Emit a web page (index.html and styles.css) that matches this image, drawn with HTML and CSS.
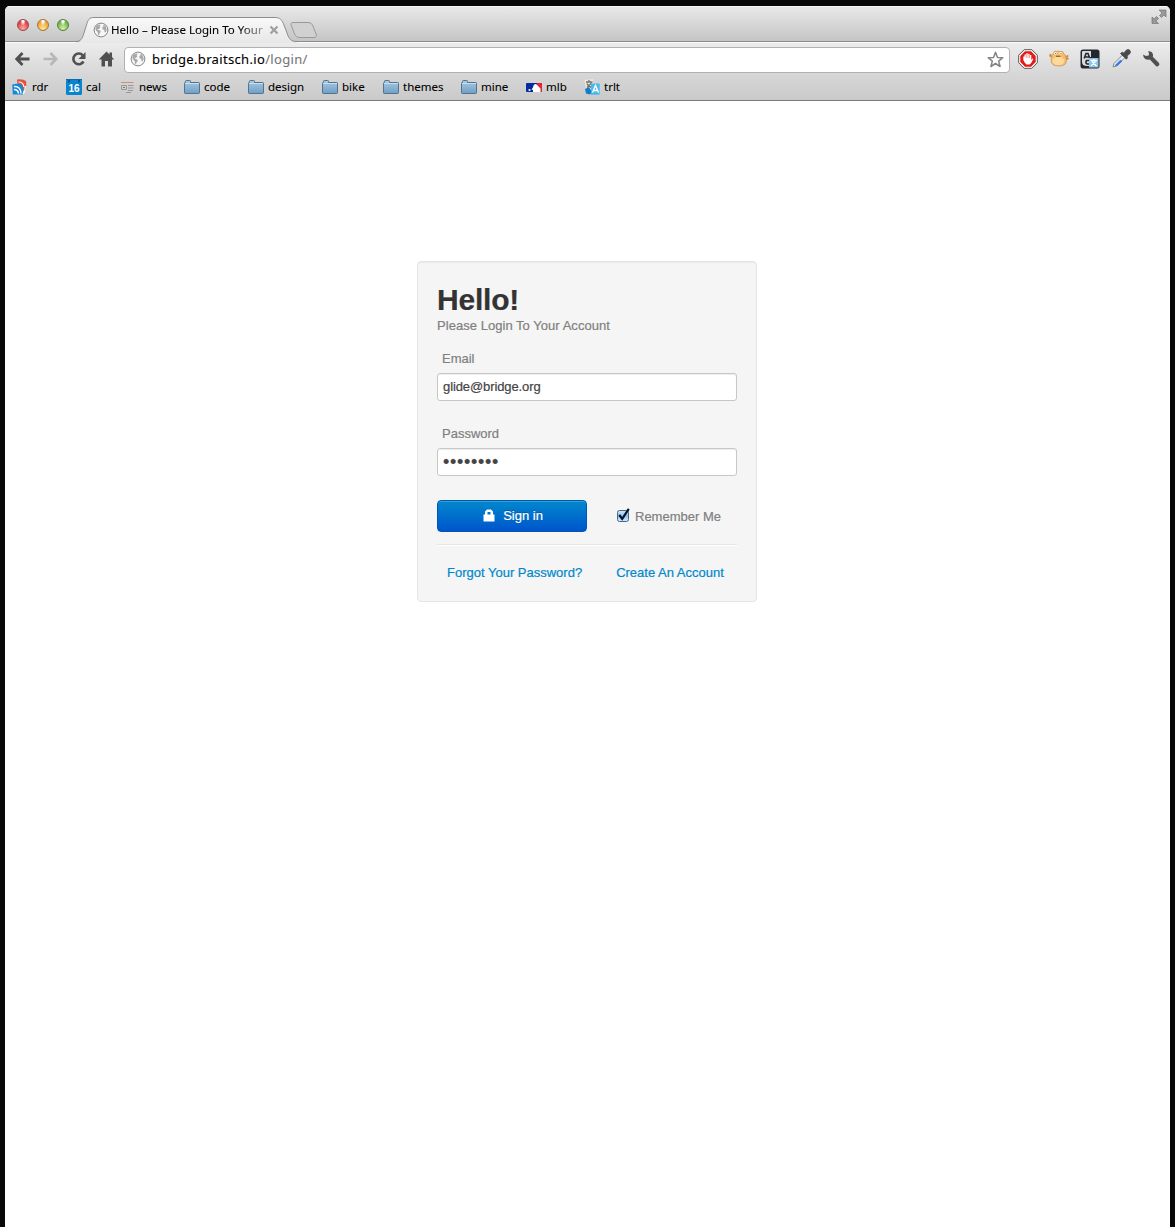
FILE: index.html
```html
<!DOCTYPE html>
<html lang="en">
<head>
<meta charset="utf-8">
<title>Hello – Please Login To Your Account</title>
<link rel="stylesheet" href="styles.css">
</head>
<body>
<svg width="0" height="0" class="defs" aria-hidden="true">
  <defs>
    <linearGradient id="folder" x2="0" y2="1"><stop offset="0" stop-color="#a9cae3"/><stop offset="1" stop-color="#6f9fc6"/></linearGradient>
    <linearGradient id="tabfill" x2="0" y2="1"><stop offset="0" stop-color="#f9f9f9"/><stop offset="1" stop-color="#e7e7e7"/></linearGradient>
    <linearGradient id="check" x2="0" y2="1"><stop offset="0" stop-color="#d5e7fa"/><stop offset=".5" stop-color="#8fc0f0"/><stop offset="1" stop-color="#d4f0ff"/></linearGradient>
    <symbol id="globe" viewBox="0 0 16 16">
      <circle cx="8" cy="8" r="6.900" fill="#f7f7f7" stroke="#858585" stroke-width="1"/>
      <path d="M3 4 6.300 2.300l1.300 1.200-1 1 .8.900-1.600 1.500-1.300.2 1 1 1.700.5.600 1.400-1.400 1.400-.3 2-1-.5-.4-2.600L3 8.500 2.300 6zM10.200 2.500l2 1.300 1.300 2.500v2.500l-1 1.700-1-.6-.2-1.900-1.500-.6-.6-1.900 1.300-1.300z" fill="#aaa"/>
    </symbol>
    <symbol id="folder-icon" viewBox="0 0 16 15">
      <path d="M1.500 2.500V1.300q0-.8.800-.8h3.400q.8 0 .8.800v1.200h8.200q.8 0 .8.800v9.400q0 .8-.8.800H1.300q-.8 0-.8-.8V3.300q0-.8.800-.8z" fill="url(#folder)" stroke="#54728b"/>
      <path d="M1 3.500h14" stroke="#c5dff0"/>
    </symbol>
  </defs>
</svg>
<div class="window">
  <header class="titlebar">
    <div class="lights"><i class="light red"></i><i class="light amber"></i><i class="light green"></i></div>
    <div class="tab">
      <svg class="tab-shape" width="246" height="26" viewBox="0 0 246 26">
        <path d="M0 25.500C6 25 7 22 9 16L11.500 8C13 3 14 .5 19 .5H200C205 .5 207 3 209 8L212 16C214 22 216 24.500 222 24.500V26H0z" fill="url(#tabfill)"/>
        <path d="M0 24.500C6 24.500 7 22 9 16L11.500 8C13 3 14 .5 19 .5H200C205 .5 207 3 209 8L212 16C214 22 216 24.500 222 24.500H246" fill="none" stroke="#8d8d8d"/>
        <path d="M218 5.500H233C236 5.500 237 7 238 9L241 17C242 19 241 20.500 239 20.500H225C222 20.500 220.500 19 219.500 17L216.500 9C215.500 7 216 5.500 218 5.500z" fill="#d1d1d1" stroke="#999"/>
      </svg>
      <svg class="tab-globe" width="16" height="16"><use href="#globe"/></svg>
      <span class="tab-title">Hello – Please Login To Your</span>
      <svg class="tab-close" width="10" height="10"><path d="M1.500 1.500l7 7m0-7l-7 7" stroke="#a0a0a0" stroke-width="2.300"/></svg>
    </div>
    <svg class="fullscreen" width="16" height="16" viewBox="0 0 16 16"><path d="M8 1h7v7l-2-2-2.500 2.500-2-2L11 4zM1 8l2 2 2.500-2.500 2 2L5 12l2.500 2.500H1z" fill="#999" stroke="#777" stroke-width=".7"/></svg>
  </header>
  <div class="toolbar">
    <svg width="16" height="16" viewBox="0 0 16 16"><path d="M7.500 2 1.800 8l5.700 6M2 8H14.500" fill="none" stroke="#505050" stroke-width="2.800"/></svg>
    <svg width="16" height="16" viewBox="0 0 16 16"><path d="M7.500 2l5.700 6-5.700 6M13 8H.5" fill="none" stroke="#b7b7b7" stroke-width="2.600"/></svg>
    <svg width="16" height="16" viewBox="0 0 16 16"><path d="M11.800 4.300A5.400 5.400 0 1 0 12.500 10.500" fill="none" stroke="#505050" stroke-width="2.600"/><path d="M14.500 1v7h-7z" fill="#505050"/></svg>
    <svg width="16" height="16" viewBox="0 0 16 16"><path d="M7.500.5L10.500 3.500V1.500H13v4.500l2.200 2.400H13V15.500H9V10H6v5.500H2.500V8.400H-.2z" fill="#505050"/></svg>
    <div class="omnibox">
      <svg width="16" height="16"><use href="#globe"/></svg>
      <span class="url">bridge.braitsch.io<span class="path">/login/</span></span>
      <svg class="star" width="17" height="17" viewBox="0 0 17 17"><path d="M8.500 1.300l2 5.100 5.300.3-4.100 3.400 1.400 5.400-4.600-3-4.600 3 1.400-5.400L1.200 6.700l5.300-.3z" fill="#fff" stroke="#858585" stroke-width="1.500" stroke-linejoin="round"/></svg>
    </div>
    <div class="extensions">
      <svg width="20" height="20" viewBox="0 0 20 20"><path d="M6.200.7h7.600l5.500 5.500v7.600l-5.500 5.500H6.200L.7 13.800V6.200z" fill="#fff" stroke="#555"/><path d="M6.900 2.300h6.200l4.600 4.600v6.200l-4.600 4.600H6.900l-4.600-4.600V6.900z" fill="#e31c16"/><path d="M6.500 9V5.500h1.400V9h.4V4.300h1.500V9h.4V4.800h1.400V9h.4V6h1.300v5l1-1.500 1 .6-2.100 4-1.600 1.500H8.500L6.800 13.800 5.300 11V7.500h1.200z" fill="#fff"/></svg>
      <svg width="20" height="20" viewBox="0 0 20 20">
        <path d="M4.500 4.500Q4.500 2 7 2.200q1 .3 2 .2h2q3.500-.9 3.500 2.200 2 1 2.500 3l2-1.500-.3 2.500.8 1.500-2 .4q.5 6.500-7.500 6.500T2.200 11.500Q2 10.300 2.500 9L.5 7l.8-2 1.900 1.500z" fill="#f4bd6a" stroke="#c18f4e" stroke-width=".7"/>
        <ellipse cx="9.300" cy="12" rx="6" ry="4.200" fill="#ffd99a"/>
        <circle cx="6.500" cy="4.300" r="1.300" fill="#fff"/><circle cx="11.800" cy="4.300" r="1.300" fill="#fff"/>
        <path d="M6.200 4.500h1m4.300 0h1M7 7.300h4.500" stroke="#79502f" stroke-width="1.100"/>
        <path d="M1 5.500l1.500 2.500M16.500 8.500l2-1.500M17 9.500l2 .2" stroke="#d2812f" stroke-width="1.200"/>
      </svg>
      <svg width="20" height="20" viewBox="0 0 20 20"><rect x=".5" y=".5" width="19" height="19" rx="2.500" fill="#24282c"/><path d="M2 3q0-1 1-1h8v6h-1v9H7q-5 0-5-4z" fill="#d7dce0"/><path d="M4.200 9.500L6 4.500h2l1.800 5M5.500 8h3M10 11.500H6.500q-1.500 2.500.7 3.500h2.300" fill="none" stroke="#25292d" stroke-width="1.600"/><rect x="9" y="9" width="9.500" height="9.500" fill="#8bc5ec"/><path d="M10.500 11.500h6.500M13.700 10v2M11 17l4.500-4.500M12 12.500l4.500 4.500" stroke="#fff" stroke-width="1.300"/></svg>
      <svg width="20" height="20" viewBox="0 0 20 20"><path d="M2 18l1-3.500L11.500 6l2.500 2.500L5.500 17z" fill="#e5edf4" stroke="#888"/><path d="M4 16.500l5.500-5.500 1.500 1.200-5 4.800z" fill="#2d79dd" stroke="#2d79dd" stroke-width=".5"/><path d="M9.500 4.500l1.700-1.300 1.600.8L15.500 1q2-1 3.300.3 1.200 1.400.2 3.200L16 7l.6 1.700-1.300 1.500z" fill="#4a4a4a" stroke="#4a4a4a" stroke-width=".8"/></svg>
      <svg width="18" height="18" viewBox="0 0 18 18"><path d="M6 1.400Q10 1 11 4.500q.1 1.500-.2 2.200L17 13q1 1.500-.3 2.800-1.500 1.200-2.800.1L7.800 9.500q-4 1-6-2L1 4.500l3 1.600 2.700-.5.300-2.300z" fill="#505050"/></svg>
    </div>
  </div>
  <nav class="bookmarks">
    <a class="bookmark"><svg width="16" height="16" viewBox="0 0 16 16"><path d="M5 .5q6-.8 9 1.500.7 5-.5 10L6 11z" fill="#e05343"/><path d="M6.500 3q5 0 5.500 5" stroke="#fff" stroke-width="1.200" fill="none"/><path d="M.3 5.500Q6 4 10 6q2 4 1 9.500H.8z" fill="#1389d7"/><path d="M2 7.500q6.500-.5 7 7M2 10.500q4 0 4.500 4" fill="none" stroke="#fff" stroke-width="1.500"/><path d="M11 15q2.500-3 2.500-8" stroke="#eef7fc" stroke-width="1.500" fill="none"/></svg>rdr</a>
    <a class="bookmark"><svg width="16" height="16" viewBox="0 0 16 16"><rect width="16" height="16" rx="1.500" fill="#0a84cf"/><path d="M0 .5h16" stroke="#086cad"/><path d="M3 1v2.500m10-2.500v2.500" stroke="#045990" stroke-width="2"/><text x="8" y="12.800" class="cal-day">16</text></svg>cal</a>
    <a class="bookmark news"><svg width="16" height="16" viewBox="0 0 16 16"><path d="M1 3.500h12.500" stroke="#d88983"/><path d="M1.500 6.500h5v4h-5zM8 6.500h5.500M8 9h5.500M8 11.500h5M6 13.500h5" fill="none" stroke="#999"/><path d="M3 8.500h2" stroke="#777"/></svg>news</a>
    <a class="bookmark"><svg width="16" height="15"><use href="#folder-icon"/></svg>code</a>
    <a class="bookmark"><svg width="16" height="15"><use href="#folder-icon"/></svg>design</a>
    <a class="bookmark"><svg width="16" height="15"><use href="#folder-icon"/></svg>bike</a>
    <a class="bookmark"><svg width="16" height="15"><use href="#folder-icon"/></svg>themes</a>
    <a class="bookmark"><svg width="16" height="15"><use href="#folder-icon"/></svg>mine</a>
    <a class="bookmark"><svg width="16" height="16" viewBox="0 0 16 16"><rect y="4" width="16" height="9" rx="1" fill="#062b9d"/><path d="M11 4h4q1 0 1 1v7q0 1-1 1h-4z" fill="#e3252d"/><path d="M7.500 6.500Q8 5 9.500 5t2 1.500L12.500 7.500l2 2V13H7v-2L5.500 10.500 7 8.500z" fill="#fff"/><circle cx="3.500" cy="11" r="1.100" fill="#fff"/></svg>mlb</a>
    <a class="bookmark"><svg width="16" height="16" viewBox="0 0 16 16"><path d="M.5 1l8.500-1 1 10-8 1z" fill="#e9e9e0"/><path d="M2 3h6.500M5 1v2M3 4.500q1 3 5 4M7.500 4L3 8.500" stroke="#77736d" stroke-width="1.300" fill="none"/><path d="M1 10l4-2 3 5-2 2.500-4-1z" fill="#147bc7"/><path d="M7 4.500h8q.7 0 .7.700V15q0 .7-.7.700H7z" fill="#4bb9ed"/><path d="M8.500 13.500l3-7 3 7M9.500 11.500h4" fill="none" stroke="#fff" stroke-width="1.400"/></svg>trlt</a>
  </nav>
  <main class="page">
    <form class="login">
      <h1>Hello!</h1>
      <p class="lead">Please Login To Your Account</p>
      <label class="label" for="email">Email</label>
      <input class="field" id="email" type="text" value="glide@bridge.org">
      <label class="label">Password</label>
      <div class="field password">••••••••</div>
      <div class="actions">
        <button class="signin" type="button"><svg width="12" height="13" viewBox="0 0 12 13"><path d="M.5 5.500h1.500V2.500L4 .5h4l2 2v3h1.500V12.500H.5zM4.500 5.500h3V3h-3z" fill="#fff"/></svg><span>Sign in</span></button>
        <label class="remember"><svg width="15" height="17" viewBox="0 0 15 17"><rect x="1.500" y="3.500" width="11" height="11" rx="2" fill="url(#check)" stroke="#506487"/><path d="M3.200 8l3 3.800L12.800 1.800" fill="none" stroke="#07152b" stroke-width="2.200"/></svg><span>Remember Me</span></label>
      </div>
      <hr>
      <div class="links"><a>Forgot Your Password?</a><a>Create An Account</a></div>
    </form>
  </main>
</div>
</body>
</html>
```

FILE: styles.css
```css
* { box-sizing: border-box; }
body {
  margin: 0;
  padding: 6px 5px 0;
  height: 1227px;
  overflow: hidden;
  background: #080808;
  font: 13px/18px "Liberation Sans", Arial, sans-serif;
}
.defs { position: absolute; }
svg { display: block; flex: none; }
.window {
  height: 1221px;
  background: #fff;
  border-radius: 5px 5px 0 0;
  overflow: hidden;
}
.titlebar {
  display: flex;
  height: 36px;
  padding-left: 12px;
  background: linear-gradient(#e9e9e9, #c5c5c5);
  border-bottom: 1px solid #8d8d8d;
  box-shadow: inset 0 1px #f7f7f7;
}
.lights { display: flex; gap: 8px; padding-top: 13px; width: 58px; }
.light {
  width: 12px;
  height: 12px;
  border-radius: 50%;
  border: 1px solid;
  flex: none;
}
.red { background: radial-gradient(ellipse at 50% 10%, #fff 0 10%, transparent 38%), radial-gradient(circle at 50% 85%, #ffaaa3, #df444b 65%); border-color: #9c4444; }
.amber { background: radial-gradient(ellipse at 50% 10%, #fff 0 10%, transparent 38%), radial-gradient(circle at 50% 85%, #ffe995, #eea33a 65%); border-color: #a17438; }
.green { background: radial-gradient(ellipse at 50% 10%, #fff 0 10%, transparent 38%), radial-gradient(circle at 50% 85%, #d4f5a3, #75b44c 65%); border-color: #4f8040; }
.tab {
  position: relative;
  display: flex;
  align-items: center;
  width: 246px;
  height: 26px;
  margin-top: 11px;
  padding-left: 18px;
}
.tab-shape { position: absolute; left: 0; top: 0; }
.tab-globe, .tab-title, .tab-close { position: relative; }
.tab-title {
  width: 156px;
  margin-left: 2px;
  font: 11.500px/16px "Noto Sans", sans-serif;
  letter-spacing: .03px;
  white-space: nowrap;
  color: #000;
  -webkit-text-stroke: .1px;
  -webkit-mask-image: linear-gradient(90deg, #000 126px, rgba(0,0,0,.3) 154px);
  mask-image: linear-gradient(90deg, #000 126px, rgba(0,0,0,.3) 154px);
}
.tab-close { margin-left: 2px; }
.fullscreen { margin: 3px 3px 0 auto; }
.toolbar {
  display: flex;
  align-items: center;
  gap: 12px;
  height: 35px;
  padding: 0 7px 2px 10px;
  background: linear-gradient(#ececec, #d5d5d5);
  border-top: 1px solid #fafafa;
}
.omnibox {
  display: flex;
  align-items: center;
  width: 886px;
  height: 26px;
  margin: 1px 0 0 -3px;
  padding: 0 5px 1px;
  background: #fff;
  border: 1px solid #b1b1b1;
  border-radius: 4px;
}
.url {
  margin-left: 6px;
  font: 13px/18px "Noto Sans", sans-serif;
  letter-spacing: .33px;
  color: #000;
  -webkit-text-stroke: .1px;
}
.path { color: #777; }
.star { margin-left: auto; }
.extensions { display: flex; align-items: center; gap: 11px; margin-left: -4px; }
.bookmarks {
  display: grid;
  grid-template-columns: 54px 54px 64px 64px 74px 61px 78px 65px 58px 50px;
  height: 24px;
  padding: 0 0 3px 7px;
  align-items: center;
  background: linear-gradient(#d5d5d5, #cacaca);
  border-bottom: 1px solid #797979;
}
.bookmark {
  display: flex;
  align-items: center;
  gap: 4px;
  font: 11.500px/16px "Noto Sans", sans-serif;
  color: #000;
  -webkit-text-stroke: .1px;
}
.bookmark.news { gap: 3px; }
.cal-day { font: bold 10px "Liberation Sans", sans-serif; fill: #fff; text-anchor: middle; -webkit-text-stroke: 0; }
.page { display: flex; justify-content: center; padding-top: 160px; }
.login {
  width: 340px;
  height: 341px;
  margin-right: 1px;
  padding: 19px;
  background: #f5f5f5;
  border: 1px solid #e5e5e5;
  border-radius: 4px;
  box-shadow: inset 0 1px 1px rgba(0,0,0,.05);
  color: #808080;
  -webkit-text-stroke: .2px;
}
h1 {
  margin: 0;
  padding-top: 1px;
  font-size: 30px;
  line-height: 35px;
  letter-spacing: -.2px;
  color: #333;
}
.lead { margin: 0 0 15px; letter-spacing: .04px; }
.label { display: block; padding-left: 5px; margin-bottom: 5px; }
.field {
  display: block;
  width: 300px;
  height: 28px;
  margin-bottom: 24px;
  padding: 3px 5px 5px;
  font: 13px/18px "Liberation Sans", Arial, sans-serif;
  letter-spacing: -.1px;
  color: #444;
  background: #fff;
  border: 1px solid #c7c7c7;
  border-radius: 3px;
  box-shadow: inset 0 1px 1px rgba(0,0,0,.075);
}
.password { padding-top: 4px; font-size: 18px; letter-spacing: .7px; }
.actions { display: flex; align-items: center; height: 32px; }
.signin {
  display: flex;
  justify-content: center;
  align-items: center;
  gap: 8px;
  width: 150px;
  height: 32px;
  padding: 0 0 1px 2px;
  font: 13px/18px "Liberation Sans", Arial, sans-serif;
  color: #fff;
  -webkit-text-stroke: .2px;
  text-shadow: 0 -1px rgba(0,0,0,.25);
  background: linear-gradient(#08c, #05c);
  border: 1px solid #0056b2;
  border-radius: 4px;
  box-shadow: inset 0 1px rgba(255,255,255,.2);
}
.remember { display: flex; align-items: center; margin-left: 29px; gap: 4px; }
.remember svg { margin-bottom: 2px; }
.remember span { padding-top: 1px; }
hr { margin: 12px 0 18px; border: 0; border-top: 1px solid #e5e5e5; border-bottom: 1px solid #fff; }
.links { display: flex; gap: 34px; padding-left: 10px; color: #08c; white-space: nowrap; }
```
